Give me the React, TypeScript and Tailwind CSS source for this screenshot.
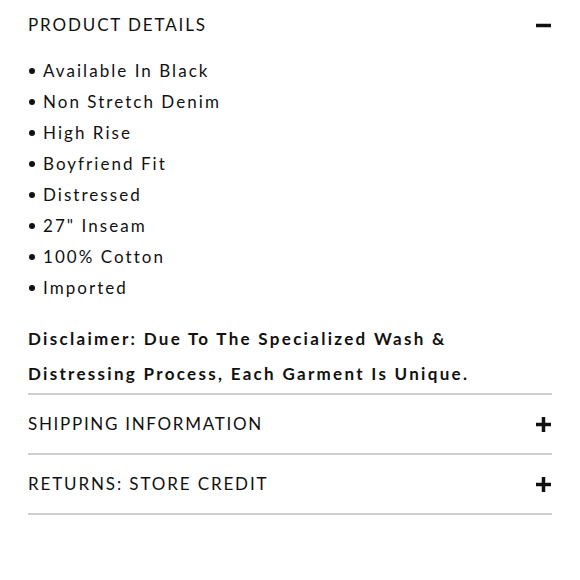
const items = [
  'Available In Black',
  'Non Stretch Denim',
  'High Rise',
  'Boyfriend Fit',
  'Distressed',
  '27" Inseam',
  '100% Cotton',
  'Imported',
]

function Plus() {
  return (
    <svg width="15" height="15" viewBox="0 0 15 15" className="flex-shrink-0">
      <rect x="0" y="5.75" width="15" height="3.5" fill="#111" />
      <rect x="5.75" y="0" width="3.5" height="15" fill="#111" />
    </svg>
  )
}

function Minus() {
  return (
    <svg width="15" height="15" viewBox="0 0 15 15" className="flex-shrink-0">
      <rect x="0" y="5.75" width="15" height="3.5" fill="#111" />
    </svg>
  )
}

export default function App() {
  return (
    <div className="w-[580px] h-[580px] bg-white text-[#111] font-['Lato','Liberation_Sans',sans-serif]">
      <div className="ml-[28px] w-[524px]">
        <div className="h-[50px] flex items-center justify-between pr-[1px]">
          <h2 className="text-[17px] tracking-[0.11em] font-normal">PRODUCT DETAILS</h2>
          <Minus />
        </div>

        <ul className="pt-[5px]">
          {items.map(t => (
            <li key={t} className="flex items-center h-[31px] text-[17px] tracking-[0.12em]">
              <span className="w-[6px] h-[6px] rounded-full bg-[#111] ml-[1px] mr-[8px] flex-shrink-0" />
              <span>{t}</span>
            </li>
          ))}
        </ul>

        <p className="mt-[18px] mb-[2px] text-[17px] font-bold leading-[35px] tracking-[0.135em]">
          Disclaimer: Due To The Specialized Wash &amp;
          <br />
          Distressing Process, Each Garment Is Unique.
        </p>

        <div className="border-t-2 border-[#cfcfcf] h-[60px] flex items-center justify-between pr-[1px]">
          <span className="text-[17px] tracking-[0.1em]">SHIPPING INFORMATION</span>
          <Plus />
        </div>
        <div className="border-t-2 border-[#cfcfcf] h-[60px] flex items-center justify-between pr-[1px]">
          <span className="text-[17px] tracking-[0.11em]">RETURNS: STORE CREDIT</span>
          <Plus />
        </div>
        <div className="border-t-2 border-[#cfcfcf]" />
      </div>
    </div>
  )
}
